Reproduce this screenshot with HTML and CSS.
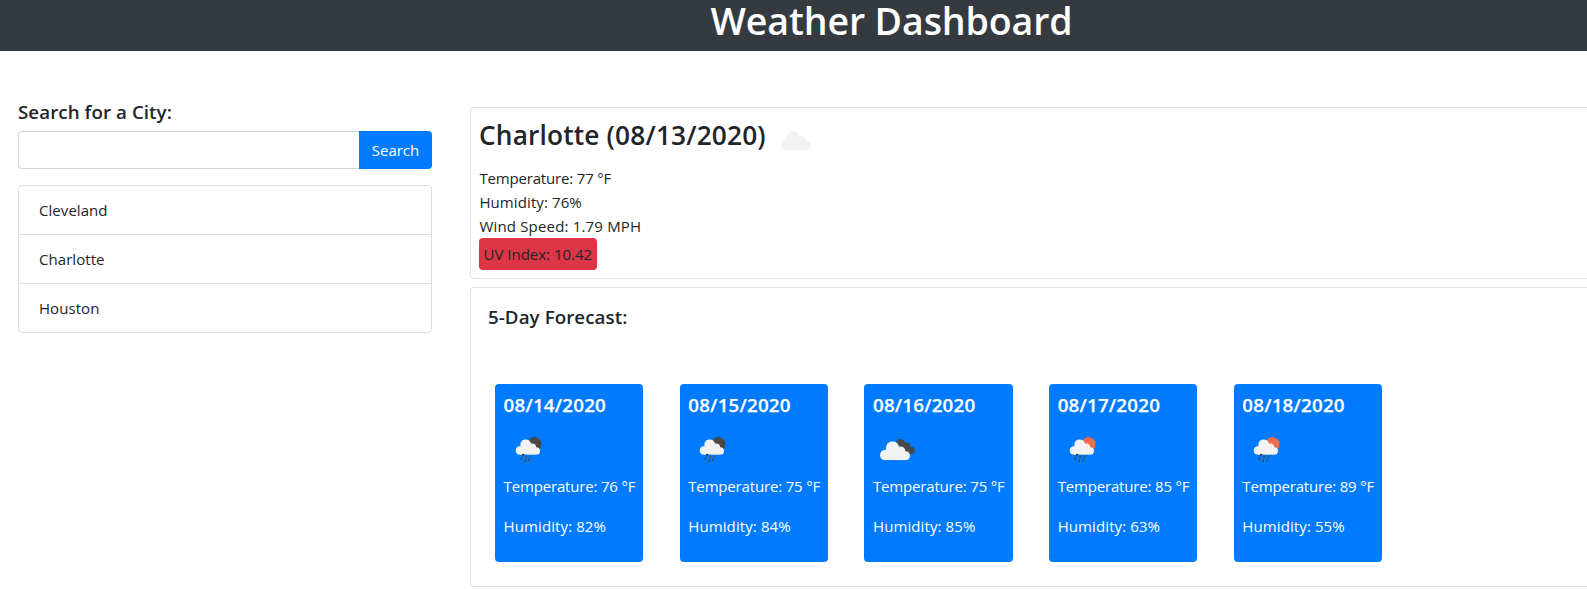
FILE: index.html
```html
<!DOCTYPE html>
<html lang="en">
<head>
<meta charset="utf-8">
<title>Weather Dashboard</title>
<link rel="stylesheet" href="styles.css">
</head>
<body>
<svg class="defs" aria-hidden="true">
  <symbol id="cloud" viewBox="0 0 30 19">
    <circle cx="5.200" cy="13.800" r="5.200"/>
    <circle cx="12.500" cy="6.600" r="6.600"/>
    <circle cx="20.500" cy="10" r="4.800"/>
    <circle cx="25.500" cy="14.500" r="4.500"/>
    <rect x="5.200" y="8.600" width="16" height="10.400"/>
    <rect x="16" y="12" width="9.500" height="7"/>
  </symbol>
  <symbol id="drops" viewBox="0 0 14 9">
    <path d="M2.900 1.500 2.700 2M6.300 3 6 3.700M10.800 2.200 10.500 2.900M1.400 4.800 1.100 5.500M9.400 6 9.100 6.900M5.300 7 5 7.700" fill="none" stroke="#484848" stroke-width="1.700" stroke-linecap="round"/>
    <circle cx="3.300" cy=".9" r=".9" fill="#333"/>
  </symbol>
  <symbol id="rain-night" viewBox="0 0 28 26">
    <circle cx="19.500" cy="7.100" r="7" fill="#484848"/>
    <use href="#cloud" x="0.500" y="2.200" width="24.500" height="15.500" fill="#f2f2f2"/>
    <use href="#drops" x="5" y="16.500" width="14" height="9"/>
  </symbol>
  <symbol id="rain-day" viewBox="0 0 28 26">
    <circle cx="19.500" cy="7.100" r="7" fill="#ec6e4c"/>
    <use href="#cloud" x="0.500" y="2.200" width="24.500" height="15.500" fill="#f2f2f2"/>
    <use href="#drops" x="5" y="16.500" width="14" height="9"/>
  </symbol>
  <symbol id="broken" viewBox="0 0 36 23">
    <path d="M16 4a5 5 0 0 1 9.300.5 4 4 0 0 1 5.200 4.500 3.600 3.600 0 0 1 1.500 7.100h-6z" fill="#484848"/>
    <use href="#cloud" x="0" y="3.200" width="30" height="19" fill="#f2f2f2"/>
  </symbol>
</svg>

<header class="banner"><h1>Weather Dashboard</h1></header>

<main class="layout">
  <aside class="sidebar">
    <label class="heading" for="city">Search for a City:</label>
    <form class="search">
      <input id="city" type="text">
      <button type="button">Search</button>
    </form>
    <ul class="cities">
      <li>Cleveland</li>
      <li>Charlotte</li>
      <li>Houston</li>
    </ul>
  </aside>

  <div class="content">
    <section class="panel current">
      <h2><span class="place">Charlotte (08/13/2020)</span><svg class="now"><use href="#cloud"/></svg></h2>
      <p class="temp">Temperature: 77 °F</p>
      <p>Humidity: 76%</p>
      <p class="wind">Wind Speed: 1.79 MPH</p>
      <span class="uv">UV Index: 10.42</span>
    </section>

    <section class="panel forecast">
      <h3 class="heading">5-Day Forecast:</h3>
      <div class="days">
        <article class="day"><h4>08/14/2020</h4><svg class="icon rain"><use href="#rain-night"/></svg><p class="temp">Temperature: 76 °F</p><p>Humidity: 82%</p></article>
        <article class="day"><h4>08/15/2020</h4><svg class="icon rain"><use href="#rain-night"/></svg><p class="temp">Temperature: 75 °F</p><p>Humidity: 84%</p></article>
        <article class="day"><h4>08/16/2020</h4><svg class="icon clouds"><use href="#broken"/></svg><p class="temp">Temperature: 75 °F</p><p>Humidity: 85%</p></article>
        <article class="day"><h4>08/17/2020</h4><svg class="icon rain"><use href="#rain-day"/></svg><p class="temp">Temperature: 85 °F</p><p>Humidity: 63%</p></article>
        <article class="day"><h4>08/18/2020</h4><svg class="icon rain"><use href="#rain-day"/></svg><p class="temp">Temperature: 89 °F</p><p>Humidity: 55%</p></article>
      </div>
    </section>
  </div>
</main>
</body>
</html>
```

FILE: styles.css
```css
* { box-sizing: border-box; }
body {
  margin: 0;
  height: 589px;
  overflow: hidden;
  background: #fff;
  color: #212529;
  font: 15px/24px "Open Sans", "Noto Sans", sans-serif;
}
h1, h2, h3, h4, p, ul { margin: 0; padding: 0; }
.defs { display: block; width: 0; height: 0; }

.banner { height: 51px; background: #343a40; color: #fff; padding-left: 196px; }
.banner h1 { text-align: center; font-size: 37.5px; line-height: 42px; font-weight: 600; letter-spacing: -0.1px; }

.layout { display: flex; }
.sidebar { width: 470px; padding: 49px 38px 0 18px; }
.heading { display: block; font-size: 18.75px; line-height: 24px; font-weight: 600; letter-spacing: 0.06px; }
.search { display: flex; height: 38px; margin-top: 7px; }
.search input {
  flex: 1;
  min-width: 0;
  border: 1px solid #ced4da;
  border-right: 0;
  border-radius: 4px 0 0 4px;
  background: #fff;
}
.search button {
  width: 73px;
  padding: 0 0 1px;
  border: 0;
  border-radius: 0 4px 4px 0;
  background: #007bff;
  color: #fff;
  font: inherit;
}
.cities { margin-top: 16px; border: 1px solid #dfdfdf; border-radius: 4px; list-style: none; letter-spacing: 0.06px; }
.cities li { height: 48px; padding: 12px 20px; }
.cities li + li { height: 49px; border-top: 1px solid #dfdfdf; }

.content { flex: 1; padding-top: 56px; }
.panel { border: 1px solid #dee2e6; border-right: 0; border-radius: 4px 0 0 4px; }
.current { height: 172px; padding: 8px; }
.current h2 { display: flex; height: 50px; font-size: 26.25px; line-height: 38px; font-weight: 600; letter-spacing: 0.17px; }
.current p { padding-left: 0.4px; letter-spacing: 0.1px; }
.current .temp, .day .temp { letter-spacing: -0.17px; }
.current .wind { letter-spacing: 0.18px; }
.now { width: 30px; height: 19px; margin: 15px 0 0 15px; fill: #f2f2f2; }
.uv { display: block; width: 118px; height: 32px; padding: 4px 4.5px; border-radius: 4px; background: #dc3545; white-space: nowrap; }

.forecast { height: 300px; margin-top: 8px; padding: 17px 0 0 17px; }
.days { display: grid; grid-template-columns: repeat(5, 148.4px); gap: 36.3px; margin: 55px 0 0 7px; }
.day { height: 178px; padding: 8px 0 0 8.6px; border-radius: 4px; background: #007bff; color: #fff; white-space: nowrap; }
.day h4 { font-size: 18.75px; line-height: 26px; font-weight: 600; letter-spacing: 0.2px; -webkit-text-stroke: 0.25px #fff; }
.icon { display: block; }
.rain { width: 28px; height: 26px; margin: 19px 0 11px 11px; }
.clouds { width: 36px; height: 23px; margin: 20px 0 13px 7px; }
.day p { letter-spacing: 0.1px; }
.day p + p { margin-top: 16px; }
```
